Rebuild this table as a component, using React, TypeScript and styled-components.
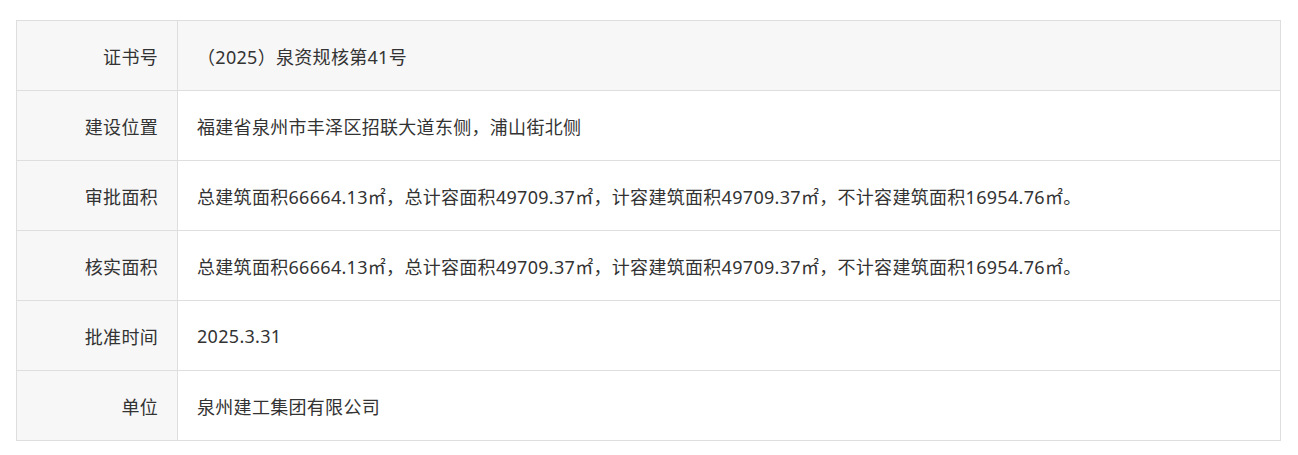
import styled, { createGlobalStyle } from "styled-components";

const rows: [string, string][] = [
  ["证书号", "（2025）泉资规核第41号"],
  ["建设位置", "福建省泉州市丰泽区招联大道东侧，浦山街北侧"],
  [
    "审批面积",
    "总建筑面积66664.13㎡，总计容面积49709.37㎡，计容建筑面积49709.37㎡，不计容建筑面积16954.76㎡。",
  ],
  [
    "核实面积",
    "总建筑面积66664.13㎡，总计容面积49709.37㎡，计容建筑面积49709.37㎡，不计容建筑面积16954.76㎡。",
  ],
  ["批准时间", "2025.3.31"],
  ["单位", "泉州建工集团有限公司"],
];

export default function App() {
  return (
    <PageWrapper>
      <GlobalStyle />
      <InfoTable>
        <tbody>
          {rows.map(([label, value], i) => (
            <Row key={label} $shaded={i === 0}>
              <LabelCell>{label}</LabelCell>
              <ValueCell>{value}</ValueCell>
            </Row>
          ))}
        </tbody>
      </InfoTable>
    </PageWrapper>
  );
}

const GlobalStyle = createGlobalStyle`
  body {
    margin: 0;
    background: #fff;
    font-family: "Noto Sans", "Noto Sans CJK SC", sans-serif;
  }
`;

const PageWrapper = styled.div`
  padding: 20px 17px 0 16px;
`;

const InfoTable = styled.table`
  width: 100%;
  border-collapse: collapse;
  font-size: 18px;
  letter-spacing: 0.3px;
  color: #333;
`;

const Row = styled.tr<{ $shaded: boolean }>`
  height: 70px;
  background: ${(p) => (p.$shaded ? "#f7f7f7" : "#fff")};
`;

const LabelCell = styled.td`
  width: 161px;
  box-sizing: border-box;
  padding: 0 19px 0 10px;
  text-align: right;
  background: #f7f7f7;
  border: 1px solid #dedede;
`;

const ValueCell = styled.td`
  padding: 0 20px 0 19px;
  text-align: left;
  border: 1px solid #dedede;
`;
